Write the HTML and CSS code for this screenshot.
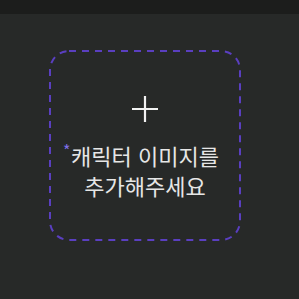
FILE: index.html
```html
<!DOCTYPE html>
<html lang="ko">
<head>
<meta charset="utf-8">
<link rel="stylesheet" href="styles.css">
</head>
<body>
<div class="topbar"></div>
<main class="main">
  <div class="upload">
    <svg class="frame" width="192" height="191" viewBox="0 0 192 191">
      <rect x="1" y="1" width="190" height="189" rx="19" fill="none" stroke="#5a3fc0" stroke-width="2" stroke-dasharray="7 6"/>
    </svg>
    <svg class="plus" width="26" height="26" viewBox="0 0 26 26">
      <path d="M13 0V26M0 13H26" stroke="#f2f2f2" stroke-width="2.2" fill="none"/>
    </svg>
    <p class="label"><span class="line1"><span class="req">*</span>캐릭터 이미지를</span><br>추가해주세요</p>
  </div>
</main>
</body>
</html>
```
FILE: styles.css
```css
html, body {
  margin: 0;
  padding: 0;
  background: #272928;
  height: 100%;
  font-family: "Noto Sans CJK KR", "Noto Sans", sans-serif;
}
.topbar {
  height: 14px;
  background: #1c1d1c;
}
.main {
  padding-top: 36px;
  padding-left: 49px;
}
.upload {
  position: relative;
  box-sizing: border-box;
  width: 192px;
  height: 191px;
  display: flex;
  flex-direction: column;
  align-items: center;
  padding-top: 46px;
}
.frame {
  position: absolute;
  left: 0;
  top: 0;
}
.plus {
  display: block;
}
.label {
  margin: 18px 0 0;
  color: #e6e6e6;
  font-size: 22px;
  line-height: 30px;
  text-align: center;
}
.line1 {
  position: relative;
}
.req {
  position: absolute;
  left: -8px;
  top: -4px;
  font-size: 16px;
  color: #7f6fe6;
}
```
